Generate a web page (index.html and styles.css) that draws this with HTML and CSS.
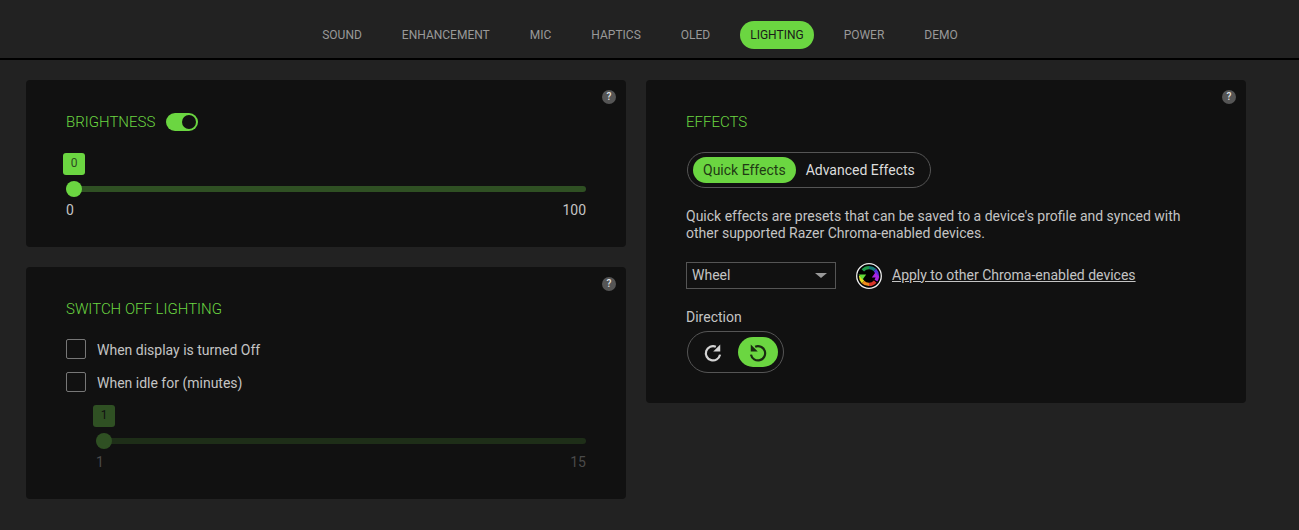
FILE: index.html
```html
<!DOCTYPE html>
<html lang="en">
<head>
<meta charset="utf-8">
<title>Lighting</title>
<link rel="stylesheet" href="styles.css">
</head>
<body>
<header class="topbar">
  <nav class="tabs">
    <a class="tab">Sound</a>
    <a class="tab">Enhancement</a>
    <a class="tab">Mic</a>
    <a class="tab">Haptics</a>
    <a class="tab">OLED</a>
    <a class="tab tab-active">Lighting</a>
    <a class="tab">Power</a>
    <a class="tab">Demo</a>
  </nav>
</header>
<main class="content">
  <div class="column">
    <section class="card card-brightness">
      <span class="help">?</span>
      <div class="heading-row">
        <h2 class="heading">BRIGHTNESS</h2>
        <span class="toggle"><span class="toggle-knob"></span></span>
      </div>
      <div class="slider">
        <span class="bubble">0</span>
        <div class="track"><span class="thumb"></span></div>
        <div class="scale"><span>0</span><span>100</span></div>
      </div>
    </section>
    <section class="card card-switch">
      <span class="help">?</span>
      <h2 class="heading">SWITCH OFF LIGHTING</h2>
      <label class="check check-first"><span class="box"></span>When display is turned Off</label>
      <label class="check"><span class="box"></span>When idle for (minutes)</label>
      <div class="slider slider-off">
        <span class="bubble">1</span>
        <div class="track"><span class="thumb"></span></div>
        <div class="scale"><span>1</span><span>15</span></div>
      </div>
    </section>
  </div>
  <div class="column">
    <section class="card card-effects">
      <span class="help">?</span>
      <h2 class="heading">EFFECTS</h2>
      <div class="segment">
        <span class="seg seg-on">Quick Effects</span>
        <span class="seg">Advanced Effects</span>
      </div>
      <p class="desc">Quick effects are presets that can be saved to a device's profile and synced with<br>other supported Razer Chroma-enabled devices.</p>
      <div class="select-row">
        <div class="select"><span class="select-text">Wheel</span><span class="caret"></span></div>
        <svg class="chroma" width="26" height="26" viewBox="0 0 26 26" aria-hidden="true">
          <circle cx="13" cy="13" r="12.3" fill="#000" stroke="#eee" stroke-width="1.3"/>
          <g fill="none" stroke-width="3.4">
            <path d="M6.8 7.4A8.4 8.4 0 0 1 13 4.6" stroke="#1f9a4a"/>
            <path d="M13 4.6A8.4 8.4 0 0 1 19 7" stroke="#157a78"/>
            <path d="M19 7A8.4 8.4 0 0 1 21.4 13" stroke="#5a30e0"/>
            <path d="M21.4 13A8.4 8.4 0 0 1 20 17.6" stroke="#a825e0"/>
            <path d="M19.2 18.6A8.4 8.4 0 0 1 13 21.4" stroke="#d8342a"/>
            <path d="M13 21.4A8.4 8.4 0 0 1 7 19" stroke="#ee8a1c"/>
            <path d="M7 19A8.4 8.4 0 0 1 4.6 13" stroke="#e2dc20"/>
          </g>
          <path d="M2.6 11.5h7.6l-3.8 5.2z" fill="#62d838"/>
          <path d="M23.4 14.5h-7.6l3.8-5.2z" fill="#a825e0"/>
        </svg>
        <a class="link">Apply to other Chroma-enabled devices</a>
      </div>
      <div class="dir-label">Direction</div>
      <div class="direction">
        <span class="dir">
          <svg width="22" height="22" viewBox="0 0 20 20" aria-hidden="true"><path class="dir-arc" d="M16.4 12.4A6.5 6.5 0 1 1 12.6 5.2"/><path class="dir-head" d="M16.6 3.2v6.4h-6.4z"/></svg>
        </span>
        <span class="dir dir-on">
          <svg class="mirror" width="22" height="22" viewBox="0 0 20 20" aria-hidden="true"><path class="dir-arc" d="M16.4 12.4A6.5 6.5 0 1 1 12.6 5.2"/><path class="dir-head" d="M16.6 3.2v6.4h-6.4z"/></svg>
        </span>
      </div>
    </section>
  </div>
</main>
</body>
</html>
```
FILE: styles.css
```css
* { box-sizing: border-box; }
html, body { height: 100%; }
body {
  margin: 0;
  background: #222222;
  color: #c4c4c4;
  font-family: Roboto, "Liberation Sans", sans-serif;
  font-size: 14px;
  overflow: hidden;
}
.topbar {
  height: 60px;
  border-bottom: 2px solid #000;
  padding-top: 21px;
}
.tabs {
  display: flex;
  justify-content: center;
  gap: 20px;
  padding-right: 19px;
}
.tab {
  height: 28px;
  line-height: 28px;
  padding: 0 10px;
  border-radius: 14px;
  font-size: 12px;
  text-transform: uppercase;
  color: #999999;
}
.tab-active {
  background: #6bd641;
  color: #1a1a1a;
}
.content {
  display: flex;
  gap: 20px;
  padding: 20px 26px;
}
.column {
  width: 600px;
  display: flex;
  flex-direction: column;
  gap: 20px;
}
.card {
  position: relative;
  background: #111111;
  border-radius: 4px;
  padding: 31px 40px 0;
}
.card-brightness { height: 167px; }
.card-switch { height: 232px; }
.card-effects { height: 323px; }
.help {
  position: absolute;
  top: 10px;
  right: 10px;
  width: 14px;
  height: 14px;
  border-radius: 50%;
  background: #555555;
  color: #e4e4e4;
  font-size: 10px;
  font-weight: 500;
  line-height: 14px;
  text-align: center;
}
.heading-row {
  display: flex;
  align-items: center;
  gap: 11px;
}
.heading {
  margin: 0;
  height: 22px;
  line-height: 22px;
  font-family: Roboto, sans-serif;
  font-size: 15px;
  font-weight: 300;
  color: #6bd641;
}
.toggle {
  display: flex;
  justify-content: flex-end;
  align-items: center;
  width: 32px;
  height: 18px;
  padding-right: 2px;
  border-radius: 9px;
  background: #6bd641;
}
.toggle-knob {
  width: 14px;
  height: 14px;
  border-radius: 50%;
  background: #111111;
}
.slider {
  position: relative;
  margin-top: 20px;
}
.bubble {
  display: block;
  width: 22px;
  height: 22px;
  margin-left: -3px;
  border-radius: 3px;
  background: #6bd641;
  color: #2d4a22;
  font-size: 12px;
  line-height: 21px;
  text-align: center;
}
.track {
  position: relative;
  height: 6px;
  margin-top: 11px;
  background: #2f5023;
  border-radius: 3px;
}
.thumb {
  position: absolute;
  left: 0;
  top: -5px;
  width: 16px;
  height: 16px;
  border-radius: 50%;
  background: #6bd641;
}
.scale {
  display: flex;
  justify-content: space-between;
  margin-top: 9px;
  line-height: 18px;
  font-size: 14px;
  color: #c4c4c4;
}
.check {
  display: flex;
  align-items: flex-start;
  gap: 11px;
  height: 20px;
  line-height: 22px;
  margin-top: 13px;
}
.check-first { margin-top: 19px; }
.box {
  width: 20px;
  height: 20px;
  border: 1px solid #777777;
  border-radius: 2px;
}
.slider-off {
  margin-left: 30px;
  margin-top: 13px;
}
.slider-off .bubble { background: #2f5023; color: #111111; }
.slider-off .track { background: #1e2e18; }
.slider-off .thumb { background: #2f5023; }
.slider-off .scale { color: #4a4a4a; }
.segment {
  display: inline-flex;
  align-items: center;
  height: 36px;
  margin-top: 19px;
  margin-left: 1px;
  padding: 0 5px;
  border: 1px solid #555555;
  border-radius: 18px;
}
.seg {
  height: 26px;
  line-height: 26px;
  padding: 0 10px;
  border-radius: 13px;
  color: #dddddd;
}
.seg-on {
  background: #6bd641;
  color: #1f3a14;
}
.desc {
  margin: 20px 0 0;
  line-height: 17px;
  color: #c4c4c4;
}
.select-row {
  display: flex;
  align-items: center;
  margin-top: 20px;
}
.select {
  display: flex;
  align-items: center;
  justify-content: space-between;
  width: 150px;
  height: 27px;
  padding: 0 8px 0 5px;
  border: 1px solid #555555;
  color: #c4c4c4;
}
.select-text { padding-bottom: 2px; }
.caret {
  width: 0;
  height: 0;
  border-left: 6px solid transparent;
  border-right: 6px solid transparent;
  border-top: 5px solid #999999;
}
.chroma { margin-left: 20px; }
.link {
  margin-left: 10px;
  padding-bottom: 2px;
  text-decoration: underline;
  color: #c4c4c4;
}
.dir-label {
  margin-top: 20px;
  line-height: 17px;
}
.direction {
  display: inline-flex;
  align-items: center;
  height: 42px;
  margin-top: 5px;
  margin-left: 1px;
  padding: 0 5px;
  border: 1px solid #555555;
  border-radius: 21px;
  gap: 5px;
}
.dir {
  display: flex;
  align-items: center;
  justify-content: center;
  width: 40px;
  height: 30px;
  border-radius: 15px;
}
.dir-on { background: #6bd641; }
.dir-arc { fill: none; stroke: #d4d4d4; stroke-width: 2; }
.dir-head { fill: #d4d4d4; }
.dir-on .dir-arc { stroke: #1a2a12; }
.dir-on .dir-head { fill: #1a2a12; }
.mirror { transform: scaleX(-1); }
```
